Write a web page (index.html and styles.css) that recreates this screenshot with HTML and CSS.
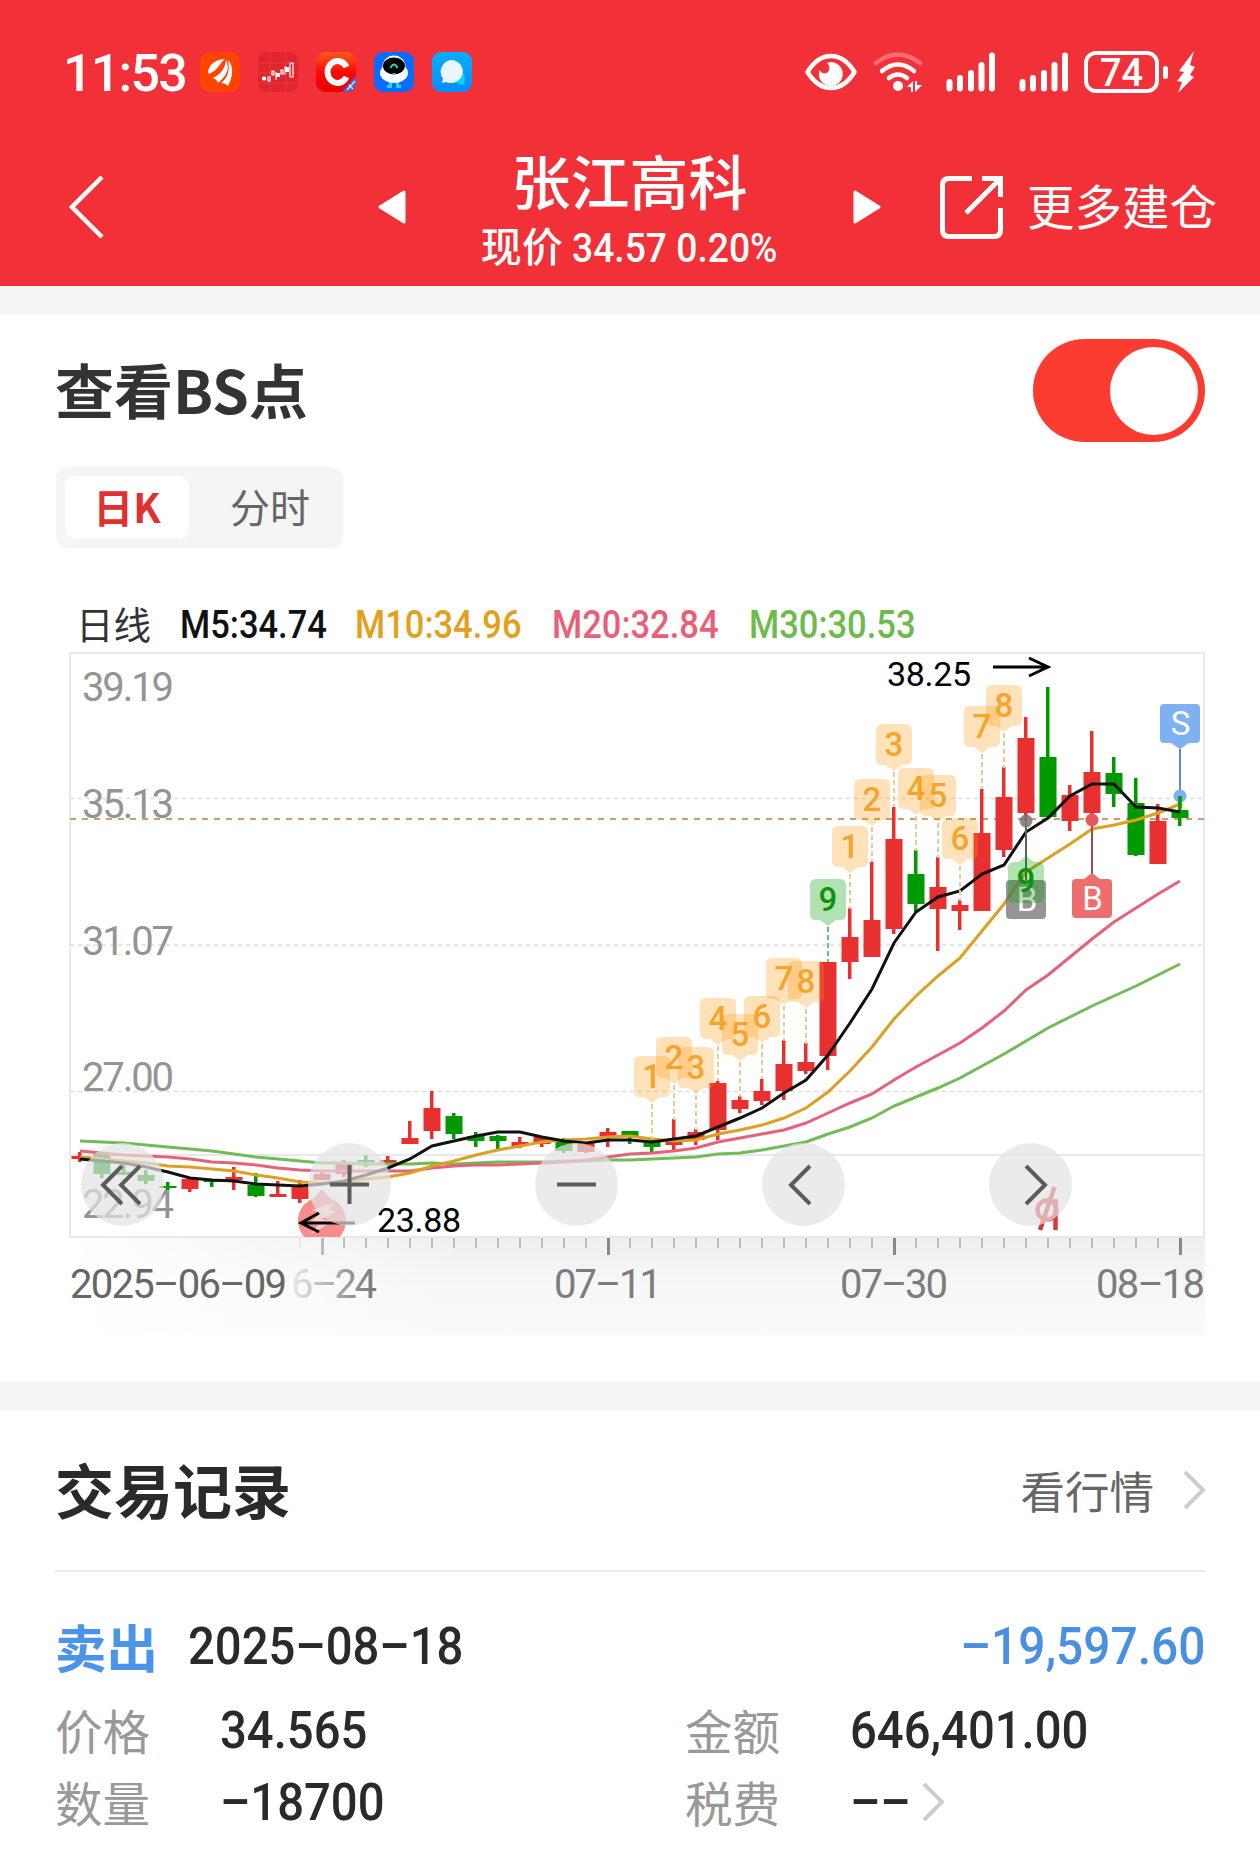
FILE: index.html
```html
<!DOCTYPE html>
<html lang="zh-CN">
<head>
  <meta charset="UTF-8">
  <title>张江高科</title>
  <link rel="stylesheet" href="styles.css">
</head>
<body>

<header>
  <div class="status-bar">
    <span class="time">11:53</span>
    <div class="apps">
      <svg viewBox="0 0 40 40">
        <rect width="40" height="40" rx="9" fill="#ff4400"/>
        <path d="M8 20C9 12 17 7 25 7C19 11 19 18 9 22ZM13 26C22 22 25 15 26 8C30 16 27 24 18 31C17 28 15 27 13 26ZM21 31C28 26 30 18 28 8C34 14 33 25 28 34C26 32 24 31 21 31Z" fill="#fff"/>
      </svg>
      <svg viewBox="0 0 40 40">
        <rect width="40" height="40" rx="9" fill="#e0262c"/>
        <path d="M0 11H40M0 21H40M0 31H40M12 0V40M28 0V40" stroke="#ea4a4c" stroke-width=".6"/>
        <path d="M6 24V29M18 20V28M27 14V23" stroke="#fff"/>
        <path d="M4 25h4v3H4ZM18 21h4v4H18ZM27 15h4v5H27Z" fill="#fff"/>
        <path d="M10 25h2v4h-2ZM14 19h2v4h-2ZM23 18h2v4h-2ZM32 11h3v14h-3Z" fill="none" stroke="#fff" stroke-width="1.2"/>
      </svg>
      <svg viewBox="0 0 40 40">
        <defs>
          <linearGradient id="cred" x2="0" y2="1"><stop offset="0" stop-color="#ff5a1e"/><stop offset=".5" stop-color="#fa0a05"/><stop offset="1" stop-color="#e60000"/></linearGradient>
          <clipPath id="appclip"><rect width="40" height="40" rx="9"/></clipPath>
        </defs>
        <g clip-path="url(#appclip)">
          <rect width="40" height="40" fill="url(#cred)"/>
          <path d="M30.500 15A10 11 0 1 0 30.500 25" fill="none" stroke="#fff" stroke-width="6"/>
          <path d="M40 24V40H26Z" fill="#3c6be0"/>
          <path d="M31 38L39 29M33 33L37 37" stroke="#cfe0ff" stroke-width="1.5"/>
        </g>
      </svg>
      <svg viewBox="0 0 40 40">
        <rect width="40" height="40" rx="9" fill="#0a6cff"/>
        <path d="M16.500 30V34.500H13M23.500 30V34.500H27" fill="none" stroke="#1fd8d8" stroke-width="3"/>
        <ellipse cx="20" cy="21" rx="14" ry="10" fill="#fff"/>
        <circle cx="20" cy="15" r="11.5" fill="#fff"/>
        <ellipse cx="20" cy="14" rx="11" ry="8.5" fill="#000"/>
        <path d="M16.500 16Q20 9 23.500 16" fill="none" stroke="#1fd8b8" stroke-width="1.800"/>
        <path d="M18 21h4l-2 2Z" fill="#1fd8b8"/>
      </svg>
      <svg viewBox="0 0 40 40">
        <defs><linearGradient id="msg" x2="0" y2="1"><stop offset="0" stop-color="#05aefc"/><stop offset="1" stop-color="#0a8cf8"/></linearGradient></defs>
        <rect width="40" height="40" rx="9" fill="url(#msg)"/>
        <path d="M30 20C34 24 33 28 32 30L33 33L27 32L20 29Z" fill="#08d0f8"/>
        <path d="M19 8a12 11.500 0 1 1 -5 22l-4 1l1 -4A12 12 0 0 1 19 8Z" fill="#eaf6ff"/>
      </svg>
    </div>
    <div class="indicators">
      <svg class="eye" viewBox="0 0 52 38">
        <path d="M2.500 19C8 10 16 3 26 3S44 10 49.500 19C44 28 36 35 26 35S8 28 2.500 19Z" fill="none" stroke="#fff" stroke-width="4.500" stroke-linejoin="round"/>
        <path d="M25 9A12 12 0 1 1 14.500 17C17 22 23 21 24 17C25 14 24 12 22 10Z" fill="#fff"/>
      </svg>
      <svg class="wifi" viewBox="0 0 50 40">
        <g fill="none" stroke="#fff" stroke-width="4.500" stroke-linecap="round">
          <path d="M3 11Q25 -6 47 11" opacity=".3"/>
          <path d="M9 19Q25 6 41 19"/>
          <path d="M16 26Q25 19 34 26"/>
        </g>
        <circle cx="25" cy="34" r="5" fill="#fff"/>
        <path d="M34 35L40 29V40H38V35ZM42 29V40L49 33H44V29Z" fill="#fff"/>
      </svg>
      <svg class="signal" viewBox="0 0 50 40"><path d="M3.500 30V36.500M14 26V36.500M25 21V36.500M35.500 13V36.500M46 3.500V36.500" stroke="#fff" stroke-width="6" stroke-linecap="round"/></svg>
      <svg class="signal" viewBox="0 0 50 40"><path d="M3.500 30V36.500M14 26V36.500M25 21V36.500M35.500 13V36.500M46 3.500V36.500" stroke="#fff" stroke-width="6" stroke-linecap="round"/></svg>
      <div class="battery">74</div>
      <i class="nub"></i>
      <svg class="bolt" viewBox="0 0 18 42"><path d="M17 0L2 20L7 21L0 30L5 31L1 42L17 26L13 24L18 16L13 14Z" fill="#fff"/></svg>
    </div>
  </div>

  <nav>
    <svg class="back" viewBox="0 0 36 64"><path d="M33 2L3 32L33 62" fill="none" stroke="#fff" stroke-width="4.500"/></svg>
    <div class="stock">
      <svg class="tri" viewBox="0 0 28 34"><path d="M26 2V32L2 17Z" fill="#fff" stroke="#fff" stroke-width="3" stroke-linejoin="round"/></svg>
      <div class="stock-name">
        <h1>张江高科</h1>
        <p>现价 <span class="num">34.57 0.20%</span></p>
      </div>
      <svg class="tri" viewBox="0 0 28 34"><path d="M2 2V32L26 17Z" fill="#fff" stroke="#fff" stroke-width="3" stroke-linejoin="round"/></svg>
    </div>
    <div class="more">
      <svg viewBox="0 0 63 63" fill="none" stroke="#fff" stroke-width="5">
        <path d="M32 2.500H9Q2.500 2.500 2.500 9V54Q2.500 60.500 9 60.500H54Q60.500 60.500 60.500 54V32"/>
        <path d="M42 2.500H60.500V21M60 3L26 37"/>
      </svg>
      <span>更多建仓</span>
    </div>
  </nav>
</header>

<section class="chart-card">
  <div class="card-head">
    <h2>查看BS点</h2>
    <div class="toggle"></div>
  </div>
  <div class="tabs">
    <span class="tab active">日K</span>
    <span class="tab">分时</span>
  </div>
  <div class="legend">
    <span class="day">日线</span>
    <span class="num">M5:34.74</span>
    <span class="num ma10">M10:34.96</span>
    <span class="num ma20">M20:32.84</span>
    <span class="num ma30">M30:30.53</span>
  </div>

  <svg class="chart" viewBox="69 650 1137 686">
    <defs>
      <linearGradient id="axisV" x2="0" y2="1"><stop offset="0" stop-color="#efefef"/><stop offset=".5" stop-color="#f7f7f7"/><stop offset="1" stop-color="#fafafa"/></linearGradient>
      <linearGradient id="axisH"><stop offset="0" stop-color="#fff"/><stop offset=".35" stop-color="#fff" stop-opacity="0"/></linearGradient>
      <linearGradient id="fade" gradientUnits="userSpaceOnUse" x1="288" x2="376" y1="0" y2="0"><stop offset="0" stop-color="#eee"/><stop offset=".55" stop-color="#aaa"/><stop offset="1" stop-color="#777"/></linearGradient>
      <clipPath id="plot"><rect x="71" y="654" width="1132" height="583"/></clipPath>
    </defs>
    <rect x="70" y="1238" width="1135" height="97" fill="url(#axisV)"/>
    <rect x="70" y="1238" width="1135" height="97" fill="url(#axisH)"/>
    <rect class="frame" x="70" y="653" width="1134" height="584"/>
    <path class="grid" d="M70 798.500H1204M70 945H1204M70 1091.500H1204"/>
    <path class="frame" d="M70 1155H1204"/>
    <path class="price" d="M70 819H1204"/>
    <g class="ylabel">
      <text x="82" y="701" textLength="92">39.19</text>
      <text x="82" y="818" textLength="92">35.13</text>
      <text x="82" y="955" textLength="92">31.07</text>
      <text x="82" y="1091" textLength="92">27.00</text>
      <text x="82" y="1218" textLength="92">22.94</text>
    </g>
    <g id="candles" clip-path="url(#plot)"></g>
    <g id="lines"></g>
    <g id="marks"></g>

    <g clip-path="url(#plot)">
      <path d="M322 1189L330 1198A24 24 0 1 1 314 1198Z" fill="#f68c8c"/>
      <path d="M312 1210L336 1202L328 1210L337 1211L322 1219L333 1221L310 1235L318 1225L308 1224L320 1213Z" fill="#fbd0d0"/>
    </g>
    <g fill="none" stroke="#dc383c" stroke-width="4.500">
      <circle cx="1047" cy="1210" r="9.500"/>
      <path d="M1055.500 1199V1230M1054.500 1187L1040 1230"/>
    </g>

    <g class="arrow">
      <path d="M993 667H1046M1029 658L1048 667L1029 676"/>
      <path d="M355 1223H302M319 1213L301 1223L319 1232"/>
    </g>
    <text class="extreme" x="887" y="686" textLength="84">38.25</text>
    <text class="extreme" x="377" y="1232" textLength="84">23.88</text>

    <g class="ctrl-bg">
      <circle cx="122.500" cy="1184.500" r="41.500"/>
      <circle cx="349.500" cy="1184.500" r="41.500"/>
      <circle cx="576.500" cy="1184.500" r="41.500"/>
      <circle cx="803.500" cy="1184.500" r="41.500"/>
      <circle cx="1030.500" cy="1184.500" r="41.500"/>
    </g>
    <path class="ctrl" d="M122 1166L103 1185L122 1204M140 1166L121 1185L140 1204M330 1184.500H369M349.500 1165V1204M557 1184.500H596M810 1166L791 1185L810 1204M1026 1166L1045 1185L1026 1204"/>

    <g id="ticks"></g>
    <g class="xlabel">
      <text x="70" y="1298" textLength="217" fill="#666">2025–06–09</text>
      <text x="291" y="1298" textLength="86" fill="url(#fade)">6–24</text>
      <text x="554" y="1298" textLength="108">07–11</text>
      <text x="840" y="1298" textLength="108">07–30</text>
      <text x="1096" y="1298" textLength="109">08–18</text>
    </g>
  </svg>
</section>

<section class="records">
  <div class="records-head">
    <h2>交易记录</h2>
    <a>看行情 <svg class="chev" viewBox="0 0 22 38"><path d="M2 1L20 19L2 37"/></svg></a>
  </div>
  <div class="trade">
    <b>卖出</b>
    <span class="num">2025–08–18</span>
    <span class="num amount">–19,597.60</span>
  </div>
  <div class="details">
    <label>价格</label><span class="num">34.565</span>
    <label>金额</label><span class="num">646,401.00</span>
    <label>数量</label><span class="num">–18700</span>
    <label>税费</label>
    <div class="tax">
      <span class="num">––</span>
      <svg class="chev" viewBox="0 0 22 38"><path d="M2 1L20 19L2 37"/></svg>
    </div>
  </div>
</section>

<script>
  const STEP = 22;
  const FIRST = 80;
  const RED = "#e83030";
  const GREEN = "#009900";

  // high, body top, body bottom, low, up/down
  const candles = [
    [1152,1156,1159,1162,1], [1154,1154,1174,1178,0], [1163,1172,1175,1175,0], [1170,1175,1181,1184,0],
    [1182,1186,1188,1190,0], [1179,1179,1189,1192,1], [1180,1180,1182,1187,0], [1167,1177,1180,1190,1],
    [1173,1185,1196,1197,0], [1181,1194,1197,1197,1], [1180,1186,1199,1203,1], [1172,1174,1180,1180,1],
    [1160,1163,1174,1177,1], [1155,1160,1162,1167,0], [1156,1160,1163,1164,1], [1121,1138,1144,1144,1],
    [1091,1108,1131,1139,1], [1113,1116,1134,1139,0], [1132,1136,1141,1147,0], [1135,1136,1141,1149,0],
    [1137,1142,1146,1148,1], [1137,1137,1144,1147,1], [1138,1142,1151,1153,0], [1143,1143,1152,1153,1],
    [1128,1132,1138,1147,1], [1131,1131,1136,1144,0], [1138,1142,1147,1152,0], [1119,1140,1145,1150,1],
    [1129,1132,1140,1145,1], [1081,1083,1130,1140,1], [1096,1100,1109,1113,1], [1079,1091,1101,1105,1],
    [1040,1064,1091,1100,1], [1043,1062,1071,1074,1], [962,962,1056,1070,1], [908,937,962,979,1],
    [862,920,957,957,1], [807,839,929,934,1], [850,874,904,913,0], [857,887,909,951,1],
    [900,905,911,930,1], [789,833,911,911,1], [767,797,850,857,1], [717,738,813,821,1],
    [687,757,817,817,0], [785,795,821,831,1], [731,772,813,822,1], [757,773,794,807,0],
    [778,803,855,856,0], [804,821,864,864,1], [796,810,818,826,0]
  ];

  const lines = {
    "#72bb56": [1141,1142,1143,1145,1147,1149,1151,1154,1157,1159,1161,1163,1163,1164,1164,1164,1163,1164,1163,1162,1162,1162,1161,1161,1160,1160,1159,1158,1157,1154,1153,1150,1146,1142,1134,1127,1118,1106,1097,1088,1078,1066,1054,1041,1028,1017,1006,996,986,975,964],
    "#e5637a": [1151,1153,1155,1156,1157,1159,1162,1163,1165,1168,1170,1171,1171,1171,1171,1171,1168,1166,1165,1165,1164,1163,1162,1160,1157,1154,1153,1151,1148,1142,1138,1134,1130,1123,1113,1103,1094,1080,1067,1055,1043,1028,1011,990,975,957,939,922,908,894,881],
    "#dca022": [1157,1159,1161,1163,1166,1167,1169,1171,1175,1178,1182,1183,1182,1179,1177,1173,1166,1161,1155,1150,1146,1142,1140,1139,1137,1136,1139,1141,1140,1134,1130,1125,1118,1108,1092,1071,1047,1019,996,976,958,931,904,872,858,844,829,825,820,813,804],
    "#111": [1159,1161,1163,1167,1172,1178,1180,1181,1184,1185,1186,1184,1181,1175,1168,1159,1146,1141,1136,1132,1132,1137,1141,1143,1140,1140,1142,1139,1136,1127,1118,1108,1093,1080,1055,1023,989,943,912,897,891,874,865,832,818,796,784,784,807,808,812]
  };

  // candle index, label, top of the flag
  const flags = [
    [26,1,1056], [27,2,1037], [28,3,1047], [29,4,998], [30,5,1014], [31,6,996], [32,7,958], [33,8,961], [34,9,879],
    [35,1,826], [36,2,779], [37,3,724], [38,4,768], [39,5,775], [40,6,818], [41,7,706], [42,8,685]
  ];

  function xOf(i) {
    return FIRST + i * STEP;
  }

  let html = "";
  candles.forEach(([high, top, bottom, low, up], i) => {
    const x = xOf(i);
    const color = up ? RED : GREEN;
    html += `<rect x="${x - 2}" y="${high}" width="3.5" height="${low - high}" fill="${color}"/>`;
    html += `<rect x="${x - 8.5}" y="${top}" width="17" height="${bottom - top}" fill="${color}"/>`;
  });
  document.getElementById("candles").innerHTML = html;

  html = "";
  for (const color in lines) {
    const points = lines[color].map((y, i) => xOf(i) + "," + y).join(" ");
    html += `<polyline points="${points}" fill="none" stroke="${color}" stroke-width="3"/>`;
  }
  document.getElementById("lines").innerHTML = html;

  html = "";
  flags.forEach(([i, label, y]) => {
    const x = xOf(i);
    const cls = label === 9 ? "flag nine" : "flag";
    html += `<g class="${cls}"><path class="stem" d="M${x} ${y + 48}V${y + 83}"/>`;
    html += `<path class="box" d="M${x - 12} ${y}h24q6 0 6 6v29q0 6 -6 6h-4l-8 6l-8 -6h-4q-6 0 -6 -6v-29q0 -6 6 -6Z"/>`;
    html += `<text x="${x}" y="${y + 32}">${label}</text></g>`;
  });

  // buy and sell points
  html += `
    <g class="bs">
      <path d="M1026 821V880" stroke="#4c6b4c" stroke-width="2"/>
      <circle cx="1026" cy="821" r="6.500" fill="#777" opacity=".85"/>
      <rect x="1006" y="880" width="40" height="39" rx="4" fill="#777" opacity=".78"/>
      <text x="1027" y="911">B</text>
      <path d="M1092 820V874" stroke="#a0484c" stroke-width="2"/>
      <circle cx="1092" cy="820" r="6.500" fill="#e6585c"/>
      <path d="M1076 879H1084L1092 873L1100 879H1108Q1112 879 1112 883V914Q1112 918 1108 918H1076Q1072 918 1072 914V883Q1072 879 1076 879Z" fill="#ee6e6e"/>
      <text x="1092.500" y="910">B</text>
      <path d="M1180 749V796" stroke="#5a8fc0" stroke-width="2"/>
      <circle cx="1180" cy="796" r="6.500" fill="#7db1ef"/>
      <path d="M1164 704H1196Q1200 704 1200 708V739Q1200 743 1196 743H1189L1180 749L1171 743H1164Q1160 743 1160 739V708Q1160 704 1164 704Z" fill="#7db1ef"/>
      <text x="1180.500" y="735">S</text>
    </g>
    <g class="flag nine">
      <path class="box" d="M1014 862h4l8 -6l8 6h4q6 0 6 6v29q0 6 -6 6h-24q-6 0 -6 -6v-29q0 -6 6 -6Z"/>
      <text x="1026" y="892">9</text>
    </g>
    <rect x="1178.200" y="796" width="3.500" height="12" fill="${GREEN}"/>`;
  document.getElementById("marks").innerHTML = html;

  html = "";
  for (let i = 10; i <= 50; i++) {
    const big = i % 13 === 11;
    html += `<rect x="${xOf(i) - (big ? 1 : .5)}" y="1238" width="${big ? 3 : 1}" height="${big ? 17 : 10}" fill="${i === 10 ? "#ddd" : big && i === 11 ? "#bbb" : "#888"}"/>`;
  }
  document.getElementById("ticks").innerHTML = html;
</script>

</body>
</html>
```
FILE: styles.css
```css
* {
  box-sizing: border-box;
}
body {
  margin: 0;
  background: #f4f4f4;
  color: #2a2a2a;
  font-family: "Noto Sans CJK SC", sans-serif;
}
h1, h2, p {
  margin: 0;
}
svg {
  display: block;
  flex: none;
}
/* narrow numerals */
.num {
  display: inline-block;
  font-family: Roboto, "Noto Sans CJK SC", sans-serif;
  font-weight: 500;
  transform: scaleX(0.908);
  transform-origin: left center;
}

/* header */
header {
  height: 286px;
  background: #f13038;
  color: #fff;
}
.status-bar {
  display: flex;
  align-items: center;
  height: 144px;
  padding: 0 65px 0 63px;
}
.time {
  width: 137px;
  padding-top: 3px;
  font: 500 52px/60px Roboto, sans-serif;
  letter-spacing: -1.800px;
}
.apps {
  display: flex;
  gap: 18px;
}
.apps svg {
  width: 40px;
  height: 40px;
}
.indicators {
  display: flex;
  align-items: center;
  margin-left: auto;
}
.eye {
  width: 52px;
  height: 38px;
}
.wifi {
  width: 50px;
  height: 40px;
  margin-left: 16px;
}
.signal {
  width: 50px;
  height: 40px;
  margin-left: 23px;
}
.battery {
  width: 75px;
  height: 42px;
  margin-left: 15px;
  border: 4px solid #fff;
  border-radius: 12px;
  font: 500 38px/36px Roboto, sans-serif;
  text-align: center;
}
.nub {
  width: 5px;
  height: 13px;
  margin: 0 9px 0 4px;
  border-radius: 3px;
  background: #fff;
}
.bolt {
  width: 18px;
  height: 42px;
}
nav {
  display: grid;
  grid-template-columns: 378px 503px 1fr;
  align-items: center;
  height: 121px;
  margin-top: -5px;
}
.back {
  width: 36px;
  height: 64px;
  margin-left: 69px;
}
.stock {
  display: flex;
  align-items: center;
  justify-content: space-between;
}
.tri {
  width: 28px;
  height: 34px;
}
.stock-name {
  padding-top: 8px;
  text-align: center;
}
.stock-name h1 {
  font-size: 59px;
  font-weight: 500;
  line-height: 66px;
}
.stock-name p {
  margin-top: 4px;
  font-size: 41px;
  font-weight: 500;
  line-height: 54px;
  white-space: nowrap;
}
.stock-name .num {
  margin-right: -20px;
}
.more {
  display: flex;
  align-items: center;
  gap: 24px;
  padding-left: 59px;
  font-size: 47.500px;
  line-height: 60px;
  white-space: nowrap;
}
.more span {
  padding-bottom: 4px;
}
.more svg {
  width: 63px;
  height: 63px;
}

/* chart card */
.chart-card {
  height: 1068px;
  margin-top: 28px;
  padding: 25px 55px 0 56px;
  background: #fff;
}
.card-head {
  display: flex;
  align-items: center;
  justify-content: space-between;
  height: 103px;
}
.card-head h2 {
  margin-left: -1px;
  padding-bottom: 4px;
  color: #333;
  font-size: 59px;
  font-weight: 700;
  line-height: 80px;
}
.toggle {
  display: flex;
  align-items: center;
  justify-content: flex-end;
  width: 172px;
  height: 103px;
  padding: 7px;
  border-radius: 52px;
  background: #fd3c31;
}
.toggle::after {
  content: "";
  width: 88px;
  height: 88px;
  border-radius: 50%;
  background: #fff;
}
.tabs {
  display: flex;
  align-items: center;
  width: 287px;
  height: 81px;
  margin-top: 25px;
  padding: 0 9px;
  border-radius: 12px;
  background: #f5f5f5;
}
.tab {
  flex: 1;
  height: 63px;
  padding-left: 17px;
  color: #666;
  font-size: 40px;
  line-height: 60px;
  text-align: center;
}
.tab.active {
  flex: 0 0 124px;
  padding-left: 0;
  border-radius: 10px;
  background: #fff;
  color: #e03030;
  font-weight: 700;
}
.legend {
  display: flex;
  align-items: center;
  gap: 29px;
  height: 60px;
  margin-top: 46px;
  padding-left: 20px;
  color: #111;
  font-size: 38px;
  line-height: 60px;
  white-space: nowrap;
}
.legend .num {
  margin-right: -15.500px;
  padding-top: 1px;
}
.legend .day {
  width: 75px;
  padding-bottom: 3px;
  color: #333;
  font-size: 37.500px;
}
.legend .ma10 {
  color: #e2a01c;
}
.legend .ma20 {
  color: #ea5f78;
}
.legend .ma30 {
  color: #6cbb4c;
}
.chart {
  width: 1137px;
  height: 686px;
  margin: -4px 0 0 13px;
  font-family: Roboto, sans-serif;
}
.frame {
  fill: none;
  stroke: #e9e9e9;
  stroke-width: 2;
}
.grid {
  stroke: #dedede;
  stroke-width: 1.500;
  stroke-dasharray: 4 4;
}
.price {
  stroke: #c3a06c;
  stroke-width: 2;
  stroke-dasharray: 6 6;
}
.ylabel {
  fill: #949494;
  font-size: 40px;
}
.xlabel {
  fill: #7c7c7c;
  font-size: 40px;
}
.extreme {
  fill: #000;
  font-size: 34px;
}
.arrow {
  fill: none;
  stroke: #000;
  stroke-width: 3;
}
.ctrl-bg {
  fill: rgba(227, 227, 227, 0.7);
}
.ctrl {
  fill: none;
  stroke: #5c5c5c;
  stroke-width: 4;
}
.flag .box {
  fill: #ff9500;
  opacity: 0.27;
}
.flag .stem {
  stroke: #e3cd98;
  stroke-width: 2;
  stroke-dasharray: 5 3;
}
.flag text {
  fill: #f5a42c;
  font-size: 33px;
  font-weight: 500;
  text-anchor: middle;
}
.flag.nine .box {
  fill: #009a00;
  opacity: 0.3;
}
.flag.nine .stem {
  stroke: #74b874;
}
.flag.nine text {
  fill: #0a940a;
}
.bs text {
  fill: #fff;
  font-size: 33px;
  text-anchor: middle;
}

/* trade records */
.records {
  height: 459px;
  margin-top: 28px;
  padding: 0 54px 0 55px;
  background: #fff;
}
.records-head {
  display: flex;
  align-items: center;
  justify-content: space-between;
  height: 162px;
  border-bottom: 2px solid #ececec;
}
.records-head h2 {
  padding-bottom: 3px;
  font-size: 59px;
  font-weight: 700;
  line-height: 80px;
}
.records-head a {
  display: flex;
  align-items: center;
  gap: 29px;
  margin-right: 1px;
  color: #666;
  font-size: 44.500px;
  line-height: 58px;
}
.chev {
  width: 22px;
  height: 38px;
  fill: none;
  stroke: #ccc;
  stroke-width: 4;
}
.trade {
  display: flex;
  align-items: center;
  height: 70px;
  margin-top: 40px;
  font-size: 52px;
  line-height: 70px;
}
.trade b {
  width: 133px;
  padding-bottom: 2px;
  color: #4a94ea;
  font-size: 51.500px;
}
.trade .amount {
  margin: 0 1px 0 auto;
  color: #4a90e2;
  transform: scaleX(0.92);
  transform-origin: right center;
}
.details {
  display: grid;
  grid-template-columns: 165px 465px 165px 1fr;
  grid-auto-rows: 72px;
  align-items: center;
  margin-top: 12px;
  font-size: 52px;
}
.details label {
  padding-bottom: 2px;
  color: #999;
  font-size: 47.500px;
}
.tax {
  display: flex;
  align-items: center;
}
.tax .num {
  margin-right: 5px;
}
```
